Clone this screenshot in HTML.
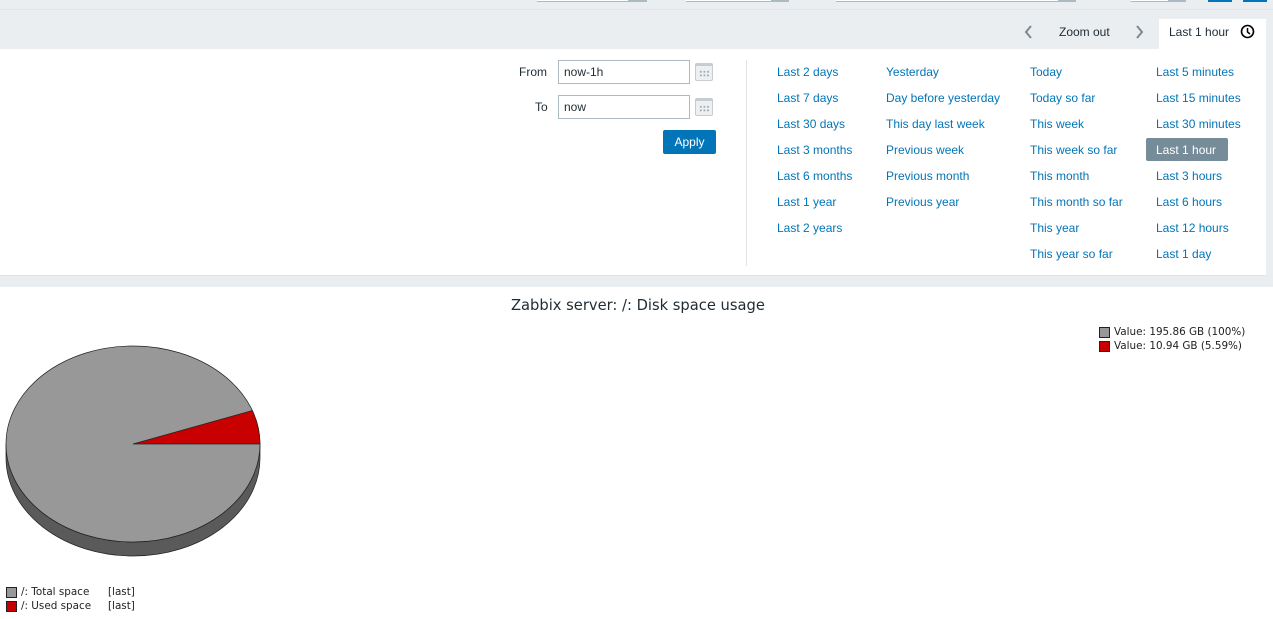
<!DOCTYPE html>
<html><head><meta charset="utf-8"><style>
*{margin:0;padding:0;box-sizing:border-box}
body{width:1273px;height:619px;overflow:hidden;background:#fff;font-family:"Liberation Sans",Arial,sans-serif;font-size:12px;color:#1f2c33;position:relative}
.abs{position:absolute}
a{color:#0275b8;text-decoration:none;position:absolute;white-space:nowrap}
.inp{position:absolute;height:24px;border:1px solid #acbbc2;background:#fff;padding:4px 5px;font-size:12px}
.cal{position:absolute;width:18px;height:18px;border:1px solid #c5cdd2;border-top:3px solid #c5cdd2;border-radius:2px;background:#edf0f2}
.cal::after{content:"";position:absolute;left:3px;top:4px;width:11px;height:7px;background:radial-gradient(circle,#9aa7ae 0.9px,transparent 1.1px) 0 0/3.6px 3.6px}
.dv{font-family:"DejaVu Sans",sans-serif;font-size:10.4px;color:#222}
</style></head><body>
<div class="abs" style="left:0;top:0;width:1273px;height:287px;background:#ebeef0"></div>
<div class="abs" style="left:0;top:9px;width:1273px;height:1px;background:#dfe4e7"></div>
<div class="abs" style="left:537px;top:0;width:110px;height:2px;border-bottom:1px solid #acbbc2;background:#fff"></div>
<div class="abs" style="left:628px;top:0;width:19px;height:2px;background:#acbbc2"></div>
<div class="abs" style="left:686px;top:0;width:103px;height:2px;border-bottom:1px solid #acbbc2;background:#fff"></div>
<div class="abs" style="left:771px;top:0;width:18px;height:2px;background:#acbbc2"></div>
<div class="abs" style="left:836px;top:0;width:240px;height:2px;border-bottom:1px solid #acbbc2;background:#fff"></div>
<div class="abs" style="left:1058px;top:0;width:18px;height:2px;background:#acbbc2"></div>
<div class="abs" style="left:1131px;top:0;width:55px;height:2px;border-bottom:1px solid #acbbc2;background:#fff"></div>
<div class="abs" style="left:1168px;top:0;width:18px;height:2px;background:#acbbc2"></div>
<div class="abs" style="left:1208px;top:0;width:24px;height:2px;background:#0275b8"></div>
<div class="abs" style="left:1243px;top:0;width:24px;height:2px;background:#0275b8"></div>

<svg class="abs" style="left:1022px;top:24px" width="14" height="16"><path d="M9 2 L4 8 L9 14" stroke="#7a8a93" stroke-width="2" fill="none"/></svg>
<div class="abs" style="left:1059px;top:25px">Zoom out</div>
<svg class="abs" style="left:1133px;top:24px" width="14" height="16"><path d="M4 2 L9 8 L4 14" stroke="#7a8a93" stroke-width="2" fill="none"/></svg>
<div class="abs" style="left:1159px;top:19px;width:107px;height:31px;background:#fff"></div>
<div class="abs" style="left:1169px;top:25px">Last 1 hour</div>
<svg class="abs" style="left:1240px;top:24px" width="15" height="15"><circle cx="7.5" cy="7.5" r="6" stroke="#000" stroke-width="1.6" fill="none"/><path d="M7.5 4v4l2.5 2" stroke="#000" stroke-width="1.5" fill="none"/></svg>

<div class="abs" style="left:0;top:49px;width:1266px;height:227px;background:#fff;border-bottom:1px solid #dfe4e7"></div>
<div class="abs" style="left:519px;top:65px">From</div>
<div class="inp" style="left:558px;top:60px;width:132px">now-1h</div>
<div class="cal" style="left:695px;top:63px"></div>
<div class="abs" style="left:535px;top:100px">To</div>
<div class="inp" style="left:558px;top:95px;width:132px">now</div>
<div class="cal" style="left:695px;top:98px"></div>
<div class="abs" style="left:663px;top:130px;width:53px;height:24px;background:#0275b8;border-radius:2px;color:#fff;text-align:center;line-height:24px">Apply</div>
<div class="abs" style="left:746px;top:60px;width:1px;height:206px;background:#dfe4e7"></div>

<a style="left:777px;top:65px">Last 2 days</a>
<a style="left:777px;top:91px">Last 7 days</a>
<a style="left:777px;top:117px">Last 30 days</a>
<a style="left:777px;top:143px">Last 3 months</a>
<a style="left:777px;top:169px">Last 6 months</a>
<a style="left:777px;top:195px">Last 1 year</a>
<a style="left:777px;top:221px">Last 2 years</a>
<a style="left:886px;top:65px">Yesterday</a>
<a style="left:886px;top:91px">Day before yesterday</a>
<a style="left:886px;top:117px">This day last week</a>
<a style="left:886px;top:143px">Previous week</a>
<a style="left:886px;top:169px">Previous month</a>
<a style="left:886px;top:195px">Previous year</a>
<a style="left:1030px;top:65px">Today</a>
<a style="left:1030px;top:91px">Today so far</a>
<a style="left:1030px;top:117px">This week</a>
<a style="left:1030px;top:143px">This week so far</a>
<a style="left:1030px;top:169px">This month</a>
<a style="left:1030px;top:195px">This month so far</a>
<a style="left:1030px;top:221px">This year</a>
<a style="left:1030px;top:247px">This year so far</a>
<a style="left:1156px;top:65px">Last 5 minutes</a>
<a style="left:1156px;top:91px">Last 15 minutes</a>
<a style="left:1156px;top:117px">Last 30 minutes</a>
<div class="abs" style="left:1146px;top:138px;width:82px;height:23px;background:#768d99;border-radius:2px"></div>
<a style="left:1156px;top:143px;color:#fff">Last 1 hour</a>
<a style="left:1156px;top:169px">Last 3 hours</a>
<a style="left:1156px;top:195px">Last 6 hours</a>
<a style="left:1156px;top:221px">Last 12 hours</a>
<a style="left:1156px;top:247px">Last 1 day</a>

<div class="abs dv" style="left:511px;top:297px;font-size:14.7px;color:#1f2c33">Zabbix server: /: Disk space usage</div>

<svg class="abs" style="left:0;top:330px" width="280" height="240">
<path d="M6 114 A127 98 0 0 0 260 114 L260 128 A127 98 0 0 1 6 128 Z" fill="#5a5a5a" stroke="#222" stroke-width="0.7"/>
<ellipse cx="133" cy="114" rx="127" ry="98" fill="#989898" stroke="#222" stroke-width="0.7"/>
<path d="M133 114 L260 114 A127 98 0 0 0 252.3 80.5 Z" fill="#c80000" stroke="#222" stroke-width="0.7"/>
</svg>

<div class="abs" style="left:1099px;top:327px;width:11px;height:11px;background:#989898;border:1px solid #222"></div>
<div class="abs dv" style="left:1114px;top:326px">Value: 195.86 GB (100%)</div>
<div class="abs" style="left:1099px;top:341px;width:11px;height:11px;background:#c80000;border:1px solid #222"></div>
<div class="abs dv" style="left:1114px;top:340px">Value: 10.94 GB (5.59%)</div>

<div class="abs" style="left:6px;top:587px;width:11px;height:11px;background:#989898;border:1px solid #222"></div>
<div class="abs dv" style="left:21px;top:586px">/: Total space</div>
<div class="abs dv" style="left:108px;top:586px">[last]</div>
<div class="abs" style="left:6px;top:601px;width:11px;height:11px;background:#c80000;border:1px solid #222"></div>
<div class="abs dv" style="left:21px;top:600px">/: Used space</div>
<div class="abs dv" style="left:108px;top:600px">[last]</div>
</body></html>
